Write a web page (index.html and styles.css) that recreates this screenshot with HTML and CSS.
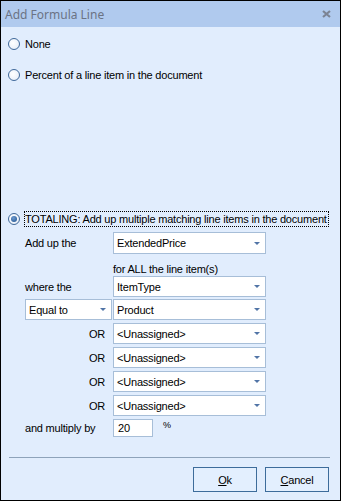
FILE: index.html
```html
<!DOCTYPE html>
<html lang="en">
<head>
    <meta charset="utf-8">
    <title>Add Formula Line</title>
    <link rel="stylesheet" href="styles.css">
</head>
<body>
    <div class="dialog">
        <div class="titlebar">
            <span class="title">Add Formula Line</span>
            <svg class="close" width="9" height="8" viewBox="0 0 9 8">
                <path d="M1 1 L8 7 M8 1 L1 7" stroke="#7c8494" stroke-width="2.2" fill="none"/>
            </svg>
        </div>

        <div class="content">
            <label class="option opt-none"><span class="radio"></span>None</label>
            <label class="option opt-percent"><span class="radio"></span>Percent of a line item in the document</label>
            <label class="option opt-total"><span class="radio checked"></span><span class="focus">TOTALING: Add up multiple matching line items in the document</span></label>

            <div class="criteria">
                <div class="row row-add">
                    <span class="lbl">Add up the</span>
                    <div class="combo">ExtendedPrice<i class="arrow"></i></div>
                </div>
                <div class="note">for ALL the line item(s)</div>
                <div class="row row-where">
                    <span class="lbl">where the</span>
                    <div class="combo">ItemType<i class="arrow"></i></div>
                </div>
                <div class="row row-cond">
                    <div class="combo combo-small">Equal to<i class="arrow"></i></div>
                    <div class="combo combo-product">Product<i class="arrow"></i></div>
                </div>
                <div class="row row-or">
                    <span class="lbl lbl-or">OR</span>
                    <div class="combo">&lt;Unassigned&gt;<i class="arrow"></i></div>
                </div>
                <div class="row row-or">
                    <span class="lbl lbl-or">OR</span>
                    <div class="combo">&lt;Unassigned&gt;<i class="arrow"></i></div>
                </div>
                <div class="row row-or">
                    <span class="lbl lbl-or">OR</span>
                    <div class="combo">&lt;Unassigned&gt;<i class="arrow"></i></div>
                </div>
                <div class="row row-or">
                    <span class="lbl lbl-or">OR</span>
                    <div class="combo">&lt;Unassigned&gt;<i class="arrow"></i></div>
                </div>
                <div class="row row-mult">
                    <span class="lbl">and multiply by</span>
                    <div class="field">20</div>
                    <span class="pct">%</span>
                </div>
            </div>

            <div class="separator"></div>

            <div class="buttons">
                <button class="btn"><u>O</u>k</button>
                <button class="btn"><u>C</u>ancel</button>
            </div>
        </div>
    </div>
</body>
</html>
```

FILE: styles.css
```css
body {
    margin: 0;
    background: #000000;
    font-family: "Liberation Sans", Arial, sans-serif;
    font-size: 11px;
    letter-spacing: -0.2px;
    color: #000000;
}
.dialog {
    width: 341px;
    height: 501px;
    box-sizing: border-box;
    border: 1px solid #000000;
    background-color: #e1edfd;
    display: flex;
    flex-direction: column;
}
.titlebar {
    height: 26px;
    background-color: #b0caee;
    display: flex;
    align-items: center;
    justify-content: space-between;
    padding: 0 9px 0 4px;
}
.title {
    font-family: "Noto Sans", "DejaVu Sans", sans-serif;
    font-size: 12px;
    letter-spacing: 0;
    color: #6b7384;
}
.close {
    display: block;
}
.content {
    flex: 1;
    display: flex;
    flex-direction: column;
}
.option {
    display: flex;
    align-items: center;
    gap: 5px;
    height: 16px;
    padding-left: 7px;
    white-space: nowrap;
}
.opt-none {
    margin-top: 9px;
}
.opt-percent {
    margin-top: 15px;
}
.opt-total {
    margin-top: 128px;
    gap: 4px;
}
.radio {
    width: 12px;
    height: 12px;
    flex: none;
    box-sizing: border-box;
    border: 1px solid #40699a;
    border-radius: 50%;
    background: radial-gradient(circle at 40% 40%, #ffffff 0%, #eef3fa 60%, #d4e0ef 100%);
    display: flex;
    align-items: center;
    justify-content: center;
}
.radio.checked::after {
    content: "";
    width: 6px;
    height: 6px;
    border-radius: 50%;
    background: radial-gradient(circle at 40% 35%, #6d9ad0 0%, #3466a0 70%);
}
.focus {
    border: 1px dotted #000000;
    padding: 0 1px 0 0;
    line-height: 14px;
}
.criteria {
    padding-left: 24px;
    display: flex;
    flex-direction: column;
}
.row {
    display: flex;
    align-items: center;
    height: 21px;
}
.row-add {
    margin-top: 5px;
    height: 22px;
}
.row-cond {
    margin-top: 2px;
}
.row-or {
    margin-top: 3px;
}
.row-mult {
    margin-top: 3px;
    height: 18px;
}
.lbl {
    width: 88px;
    flex: none;
}
.lbl-or {
    text-align: right;
    box-sizing: border-box;
    padding-right: 8px;
}
.note {
    height: 22px;
    box-sizing: border-box;
    padding: 8px 0 0 88px;
    line-height: 14px;
}
.combo {
    width: 153px;
    height: 100%;
    box-sizing: border-box;
    border: 1px solid #a7bed8;
    background-color: #ffffff;
    padding-left: 3px;
    display: flex;
    align-items: center;
    justify-content: space-between;
}
.combo-small {
    width: 87px;
}
.combo-product {
    margin-left: 1px;
}
.arrow {
    width: 0;
    height: 0;
    margin-right: 5px;
    border-left: 3px solid transparent;
    border-right: 3px solid transparent;
    border-top: 3px solid #5174a6;
}
.field {
    width: 40px;
    height: 100%;
    box-sizing: border-box;
    border: 1px solid #a7bed8;
    background-color: #ffffff;
    padding: 2px 0 0 4px;
}
.pct {
    align-self: flex-start;
    margin: 1px 0 0 10px;
    font-size: 9px;
}
.separator {
    height: 1px;
    margin: 20px 10px 0 8px;
    background-color: #8ea3ba;
}
.buttons {
    display: flex;
    justify-content: flex-end;
    gap: 8px;
    margin: 9px 11px 0 0;
}
.btn {
    width: 64px;
    height: 25px;
    border: 1px solid #3d6c9b;
    background-color: #e3effe;
    font-family: "Liberation Sans", Arial, sans-serif;
    font-size: 11px;
    letter-spacing: -0.2px;
    color: #000000;
    padding: 0;
}
```
